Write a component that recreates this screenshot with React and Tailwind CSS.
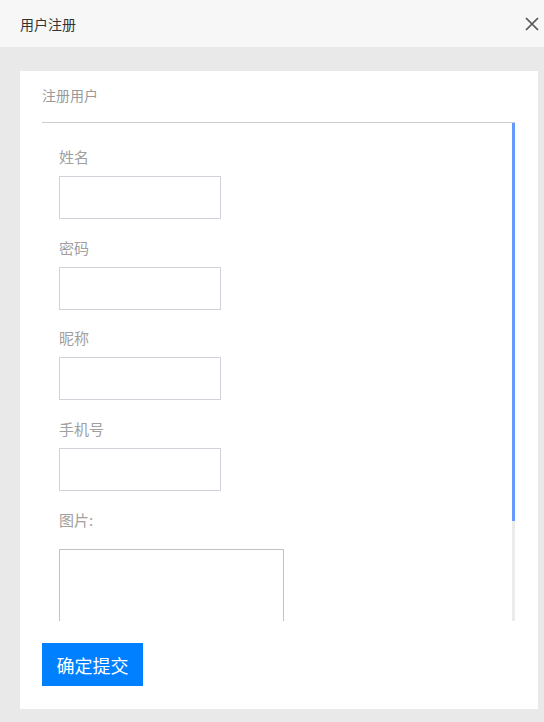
import React from "react";

const fields = ["姓名", "密码", "昵称", "手机号"];

function CloseIcon() {
  return (
    <svg width="14" height="14" viewBox="0 0 14 14" className="block">
      <path d="M1 1 L13 13 M13 1 L1 13" stroke="#555" strokeWidth="1.7" fill="none" />
    </svg>
  );
}

export default function App() {
  return (
    <div
      className="w-[544px] h-[722px] flex flex-col bg-[#e9e9e9] overflow-hidden"
      style={{ fontFamily: '"Noto Sans CJK SC", "Noto Sans", sans-serif' }}
    >
      {/* header */}
      <div className="h-[47px] shrink-0 bg-[#f7f7f7] flex items-center justify-between pl-5 pr-[5px]">
        <span className="text-[14px] leading-5 text-[#333]">用户注册</span>
        <button className="p-0 bg-transparent border-0">
          <CloseIcon />
        </button>
      </div>

      {/* card */}
      <div className="mt-6 ml-5 w-[518px] h-[638px] bg-white pt-[14px] pl-[22px] pr-[23px] flex flex-col">
        <div className="text-[14px] leading-5 text-[#999] mb-[17px]">注册用户</div>

        <div className="h-[499px] border-t border-[#cccccc] flex">
          <div className="flex-1 overflow-hidden">
            <div className="pl-[17px] pt-6 pb-6">
              {fields.map((f, i) => (
                <div key={f} className={i === 1 ? "mb-[18px]" : "mb-[19px]"}>
                  <div className="text-[15px] leading-5 text-[#a0a0a0] mb-[9px]">{f}</div>
                  <input
                    type="text"
                    className="block w-[162px] h-[43px] border border-[#d0d4da] outline-none px-2 text-sm"
                  />
                </div>
              ))}
              <div className="text-[15px] leading-5 text-[#a0a0a0] mt-[3px]">图片:</div>
              <textarea className="block mt-[19px] w-[225px] h-[170px] border border-[#c2c2c2] outline-none resize-none" />
            </div>
          </div>
          {/* scrollbar */}
          <div className="w-[3px] h-full bg-[#ebebeb] flex flex-col">
            <div className="h-[398px] bg-[#6699ff]" />
          </div>
        </div>

        <div className="mt-[22px]">
          <button className="w-[101px] h-[43px] bg-[#0080ff] text-white text-[18px] leading-none">
            确定提交
          </button>
        </div>
      </div>
    </div>
  );
}
